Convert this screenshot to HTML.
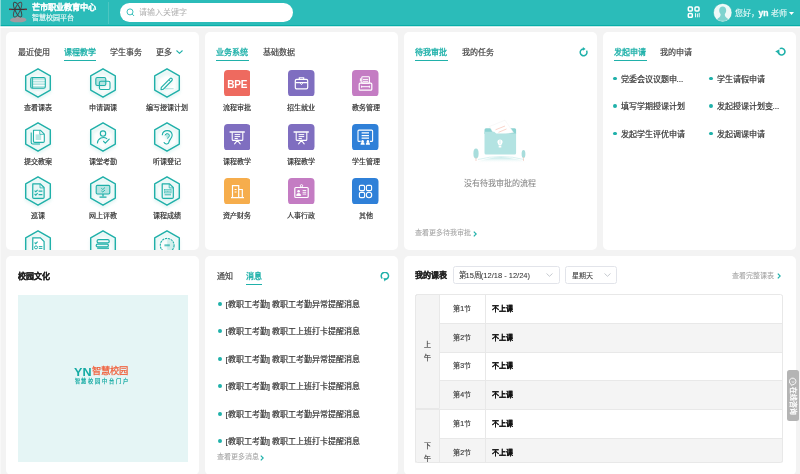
<!DOCTYPE html>
<html lang="zh-CN"><head><meta charset="utf-8">
<style>
*{margin:0;padding:0;box-sizing:border-box}
html,body{width:800px;height:474px;overflow:hidden;background:#f3f3f3;font-family:"Liberation Sans",sans-serif;color:#333;position:relative;-webkit-text-stroke:0.2px}
.a{position:absolute;white-space:nowrap}
.hdr{position:absolute;left:0;top:0;width:800px;height:26px;background:linear-gradient(#2bbcb9 0,#2bbcb9 24.6px,#08aea8 24.6px,#08aea8 26px)}
.hdr2{position:absolute;left:0;top:26px;width:800px;height:2.2px;background:linear-gradient(#9adad7,#fff 1.1px)}
.card{position:absolute;background:#fff;border-radius:5px;overflow:hidden}
.t8{font-size:8px;line-height:8px;margin-top:1px}
.t7{font-size:7px;line-height:7px}
.teal{color:#20b1aa;font-weight:normal;-webkit-text-stroke:0.32px #20b1aa !important}
.ul{position:absolute;height:1.7px;background:#20b1aa;margin-top:0.2px}
.lbl{position:absolute;width:64px;text-align:center;font-size:7px;line-height:7px;color:#333;margin-top:0.8px}
.hx{filter:drop-shadow(0 2px 1.5px rgba(31,176,169,.18))}
.teal,b,[style*="bold"]{-webkit-text-stroke:0}
.dot{position:absolute;width:3.8px;height:3.8px;margin:-0.1px 0 0 -0.1px;border-radius:50%;background:#20b1aa}
</style></head><body><div style="position:absolute;left:0;top:0;width:800px;height:474px;overflow:hidden;background:#f3f3f3;will-change:transform">

<!-- HEADER -->
<div class="hdr">
  <svg class="a" style="left:8px;top:1px" width="20" height="22" viewBox="0 0 20 22">
    <path d="M2 19.5Q3 16.5 7 16.8Q10 15 13.5 16.5Q18 16.2 18.5 19Q17 21.5 10 21.3Q3.5 21.5 2 19.5Z" fill="#a39ba0"/>
    <ellipse cx="9.6" cy="8.6" rx="2.6" ry="8" transform="rotate(-24 9.6 8.6)" fill="none" stroke="#3d4446" stroke-width="1"/>
    <ellipse cx="9.6" cy="8.6" rx="2.6" ry="8" transform="rotate(24 9.6 8.6)" fill="none" stroke="#52484c" stroke-width="1"/>
    <path d="M1 8.4H18.8" stroke="#3a3436" stroke-width="1.3"/>
    <path d="M1 8.4H3.5M16.5 8.4H18.8" stroke="#7a3038" stroke-width="1.3"/>
  </svg>
  <div class="a" style="left:32px;top:2.5px;font-size:8.2px;line-height:10px;font-weight:bold;color:#fff;-webkit-text-stroke:0.05px #fff">芒市职业教育中心</div>
  <div class="a" style="left:32px;top:13px;font-size:7px;line-height:9px;color:#e6f7f6">智慧校园平台</div>
  <div class="a" style="left:108px;top:2px;width:1px;height:22px;background:#4cc6c1"></div>
  <div class="a" style="left:120px;top:3px;width:173px;height:18.5px;background:#fff;border-radius:10px"></div>
  <svg class="a" style="left:126px;top:8px" width="9" height="9" viewBox="0 0 9 9"><circle cx="4" cy="3.9" r="3" stroke="#3cc0bc" stroke-width="1" fill="none"/><path d="M6.2 6.1 L7.8 7.7" stroke="#3cc0bc" stroke-width="1" stroke-linecap="round"/></svg>
  <div class="a" style="left:139px;top:8px;font-size:8px;line-height:9px;color:#b0b0b0;-webkit-text-stroke:0">请输入关键字</div>
  <!-- grid icon -->
  <svg class="a" style="left:687px;top:6.1px" width="13" height="12" viewBox="0 0 13 12">
    <rect x="1.3" y="1.1" width="4" height="4" rx="1" stroke="#fff" stroke-width="1.5" fill="none"/>
    <rect x="8" y="1.1" width="4" height="4" rx="1" stroke="#fff" stroke-width="1.5" fill="none"/>
    <rect x="1.3" y="7.4" width="4" height="3.9" rx="1" stroke="#fff" stroke-width="1.5" fill="none"/>
    <path d="M8.5 7.2V11.3M10.4 7.6V11.3M12.2 7V11.3" stroke="#fff" stroke-width="0.9"/>
  </svg>
  <svg class="a" style="left:713.3px;top:2.6px" width="19.4" height="19.4" viewBox="0 0 19.4 19.4">
    <circle cx="9.7" cy="9.7" r="9.3" fill="#eef9f8" stroke="#25b1ac" stroke-width="0.6"/>
    <path d="M9.7 3.6c-2 0-3.5 1.5-3.5 3.7 0 1.7.7 3 1.3 3.8.2.7 0 1.8-.6 2.6-.8 1-2.2 1.7-3 2.6a9 9 0 0 0 11.6 0c-.8-.9-2.2-1.6-3-2.6-.6-.8-.8-1.9-.6-2.6.6-.8 1.3-2.1 1.3-3.8 0-2.2-1.5-3.7-3.5-3.7z" fill="#7ed3cf"/>
    <path d="M4 16.2a9 9 0 0 0 11.4 0c-1.5.8-3.5 1.3-5.7 1.3s-4.2-.5-5.7-1.3z" fill="#a6e0dd"/>
  </svg>
  <div class="a" style="left:734.5px;top:8px;font-size:8px;line-height:10px;color:#eafaf9;-webkit-text-stroke:0.1px">您好，<b style="color:#fff;font-size:8.6px;-webkit-text-stroke:0.3px #fff">yn</b> 老师</div>
  <svg class="a" style="left:789px;top:12px" width="5" height="3" viewBox="0 0 5 3"><path d="M0 0H5L2.5 3z" fill="#fff"/></svg>
</div>

<div class="hdr2"></div>
<!-- ROW 1 -->
<div class="card" style="left:6px;top:32px;width:193px;height:218px">
  <div class="a t8" style="left:11.5px;top:16px;color:#444">最近使用</div>
  <div class="a t8 teal" style="left:57.5px;top:16px">课程教学</div>
  <div class="ul" style="left:57.5px;top:27.4px;width:32.5px"></div>
  <div class="a t8" style="left:104px;top:16px;color:#444">学生事务</div>
  <div class="a t8" style="left:149.5px;top:16px;color:#444">更多</div>
  <svg class="a" style="left:169.5px;top:18px" width="7" height="4" viewBox="0 0 7 4"><path d="M0.5 0.5L3.5 3.3L6.5 0.5" stroke="#20b1aa" stroke-width="1.1" fill="none"/></svg>
  <svg class="a hx" style="left:17.35px;top:34.90px" width="30" height="32" viewBox="0 0 30 32"><path d="M15 4.3L25.1 10.1V21.9L15 27.7L4.9 21.9V10.1Z" fill="none" stroke="#edf8f7" stroke-width="1.2" stroke-linejoin="round"/><path d="M15 1.8L27.3 8.9V23.1L15 30.2L2.7 23.1V8.9Z" fill="none" stroke="#1fb0a9" stroke-width="1.4" stroke-linejoin="round"/><rect x="7.7" y="10.5" width="14.6" height="10.8" rx="1.6" fill="#b6e5e2" stroke="#1fb0a9" stroke-width="1.1"/><path d="M9.9 13.3H21.6M9.9 15.9H21.6M9.9 18.5H21.6" stroke="#fff" stroke-width="0.9"/><path d="M9.6 10.8V21" stroke="#1fb0a9" stroke-width="0.9"/></svg>
<div class="lbl" style="left:0.35px;top:71.40px">查看课表</div>
<svg class="a hx" style="left:81.65px;top:34.90px" width="30" height="32" viewBox="0 0 30 32"><path d="M15 4.3L25.1 10.1V21.9L15 27.7L4.9 21.9V10.1Z" fill="none" stroke="#edf8f7" stroke-width="1.2" stroke-linejoin="round"/><path d="M15 1.8L27.3 8.9V23.1L15 30.2L2.7 23.1V8.9Z" fill="none" stroke="#1fb0a9" stroke-width="1.4" stroke-linejoin="round"/><rect x="7.8" y="10.5" width="10" height="8" rx="1.5" fill="#b6e5e2" stroke="#1fb0a9" stroke-width="1.1"/><rect x="11.4" y="14.2" width="10.6" height="8.3" rx="1.5" fill="none" stroke="#1fb0a9" stroke-width="1.1"/></svg>
<div class="lbl" style="left:64.65px;top:71.40px">申请调课</div>
<svg class="a hx" style="left:145.95px;top:34.90px" width="30" height="32" viewBox="0 0 30 32"><path d="M15 4.3L25.1 10.1V21.9L15 27.7L4.9 21.9V10.1Z" fill="none" stroke="#edf8f7" stroke-width="1.2" stroke-linejoin="round"/><path d="M15 1.8L27.3 8.9V23.1L15 30.2L2.7 23.1V8.9Z" fill="none" stroke="#1fb0a9" stroke-width="1.4" stroke-linejoin="round"/><path d="M9.3 20.4L18 11.6A1.3 1.3 0 0 1 19.9 13.5L11.2 22.3L9 22.6Z" fill="none" stroke="#1fb0a9" stroke-width="1.1" stroke-linejoin="round"/><path d="M16.8 12.8L18.7 14.7" stroke="#1fb0a9" stroke-width="0.8"/><path d="M13 21.7H21.6" stroke="#8fd6d2" stroke-width="0.7"/></svg>
<div class="lbl" style="left:128.95px;top:71.40px">编写授课计划</div>
<svg class="a hx" style="left:17.35px;top:88.90px" width="30" height="32" viewBox="0 0 30 32"><path d="M15 4.3L25.1 10.1V21.9L15 27.7L4.9 21.9V10.1Z" fill="none" stroke="#edf8f7" stroke-width="1.2" stroke-linejoin="round"/><path d="M15 1.8L27.3 8.9V23.1L15 30.2L2.7 23.1V8.9Z" fill="none" stroke="#1fb0a9" stroke-width="1.4" stroke-linejoin="round"/><path d="M8.2 11.5V21.5a1.5 1.5 0 0 0 1.5 1.5H17" fill="none" stroke="#1fb0a9" stroke-width="1.1"/><path d="M10.5 9.2H17.3L21.3 13.2V20.2a1.2 1.2 0 0 1-1.2 1.2H11.7a1.2 1.2 0 0 1-1.2-1.2Z" fill="#fff" stroke="#1fb0a9" stroke-width="1.1" stroke-linejoin="round"/><rect x="12.6" y="13.4" width="5.6" height="5.6" fill="#b6e5e2"/><path d="M16.8 9.5V13.3H21" fill="none" stroke="#1fb0a9" stroke-width="0.8"/></svg>
<div class="lbl" style="left:0.35px;top:125.40px">提交教案</div>
<svg class="a hx" style="left:81.65px;top:88.90px" width="30" height="32" viewBox="0 0 30 32"><path d="M15 4.3L25.1 10.1V21.9L15 27.7L4.9 21.9V10.1Z" fill="none" stroke="#edf8f7" stroke-width="1.2" stroke-linejoin="round"/><path d="M15 1.8L27.3 8.9V23.1L15 30.2L2.7 23.1V8.9Z" fill="none" stroke="#1fb0a9" stroke-width="1.4" stroke-linejoin="round"/><circle cx="15" cy="12.6" r="2.7" fill="none" stroke="#1fb0a9" stroke-width="1.1"/><path d="M9.4 22A6 6 0 0 1 18.8 17.6" fill="none" stroke="#1fb0a9" stroke-width="1.1" stroke-linecap="round"/><path d="M15.6 20.3L17.3 22.1L21.2 18.2" fill="none" stroke="#1fb0a9" stroke-width="1.2" stroke-linecap="round" stroke-linejoin="round"/></svg>
<div class="lbl" style="left:64.65px;top:125.40px">课堂考勤</div>
<svg class="a hx" style="left:145.95px;top:88.90px" width="30" height="32" viewBox="0 0 30 32"><path d="M15 4.3L25.1 10.1V21.9L15 27.7L4.9 21.9V10.1Z" fill="none" stroke="#edf8f7" stroke-width="1.2" stroke-linejoin="round"/><path d="M15 1.8L27.3 8.9V23.1L15 30.2L2.7 23.1V8.9Z" fill="none" stroke="#1fb0a9" stroke-width="1.4" stroke-linejoin="round"/><path d="M10.3 13.8A5 5 0 0 1 20.2 14C20.2 17.3 17.4 18.3 17 20.8A2.6 2.6 0 0 1 12.1 21.6" fill="none" stroke="#1fb0a9" stroke-width="1.1" stroke-linecap="round"/><path d="M13.1 14.3A2.2 2.2 0 0 1 17.4 14.4C17.4 15.8 16 16.4 15.6 17.6" fill="#b6e5e2" stroke="#1fb0a9" stroke-width="1"/></svg>
<div class="lbl" style="left:128.95px;top:125.40px">听课登记</div>
<svg class="a hx" style="left:17.35px;top:142.90px" width="30" height="32" viewBox="0 0 30 32"><path d="M15 4.3L25.1 10.1V21.9L15 27.7L4.9 21.9V10.1Z" fill="none" stroke="#edf8f7" stroke-width="1.2" stroke-linejoin="round"/><path d="M15 1.8L27.3 8.9V23.1L15 30.2L2.7 23.1V8.9Z" fill="none" stroke="#1fb0a9" stroke-width="1.4" stroke-linejoin="round"/><path d="M9.8 8.8H17.4L21.1 12.5V22.2a1.2 1.2 0 0 1-1.2 1.2H10.9a1.2 1.2 0 0 1-1.2-1.2Z" fill="#e6f6f5" stroke="#1fb0a9" stroke-width="1.2" stroke-linejoin="round"/><path d="M17 9V12.9H21" fill="none" stroke="#1fb0a9" stroke-width="0.8"/><path d="M11.6 15.6L12.8 16.8L14.6 14.8M11.6 19L12.8 20.2L14.6 18.2" fill="none" stroke="#1fb0a9" stroke-width="1.1"/><path d="M15.6 16.2H19.4M15.6 19.6H19.4" stroke="#1fb0a9" stroke-width="1.3"/></svg>
<div class="lbl" style="left:0.35px;top:179.40px">巡课</div>
<svg class="a hx" style="left:81.65px;top:142.90px" width="30" height="32" viewBox="0 0 30 32"><path d="M15 4.3L25.1 10.1V21.9L15 27.7L4.9 21.9V10.1Z" fill="none" stroke="#edf8f7" stroke-width="1.2" stroke-linejoin="round"/><path d="M15 1.8L27.3 8.9V23.1L15 30.2L2.7 23.1V8.9Z" fill="none" stroke="#1fb0a9" stroke-width="1.4" stroke-linejoin="round"/><rect x="8.2" y="10.4" width="13.6" height="8.6" rx="1.2" fill="#b6e5e2" stroke="#1fb0a9" stroke-width="1.1"/><path d="M13.3 13.3L14.8 14.5L17 12.5M13.3 15.8L14.8 17L17 15" fill="none" stroke="#1fb0a9" stroke-width="0.9"/><path d="M15 19V21.2M11.5 22.2H18.5" stroke="#1fb0a9" stroke-width="1.3"/></svg>
<div class="lbl" style="left:64.65px;top:179.40px">网上评教</div>
<svg class="a hx" style="left:145.95px;top:142.90px" width="30" height="32" viewBox="0 0 30 32"><path d="M15 4.3L25.1 10.1V21.9L15 27.7L4.9 21.9V10.1Z" fill="none" stroke="#edf8f7" stroke-width="1.2" stroke-linejoin="round"/><path d="M15 1.8L27.3 8.9V23.1L15 30.2L2.7 23.1V8.9Z" fill="none" stroke="#1fb0a9" stroke-width="1.4" stroke-linejoin="round"/><path d="M10.2 8.8H17.6L21.3 12.5V22.2a1.2 1.2 0 0 1-1.2 1.2H11.4a1.2 1.2 0 0 1-1.2-1.2Z" fill="#eaf7f6" stroke="#1fb0a9" stroke-width="1.2" stroke-linejoin="round"/><path d="M17.2 9V12.9H21.2" fill="none" stroke="#1fb0a9" stroke-width="0.8"/><rect x="12.5" y="14.6" width="6.6" height="3.4" fill="#b6e5e2" stroke="#1fb0a9" stroke-width="0.5"/><path d="M13.4 16.3H18.2" stroke="#1fb0a9" stroke-width="0.7" stroke-dasharray="1 0.5"/><path d="M12.6 19.8H19" stroke="#1fb0a9" stroke-width="0.9"/></svg>
<div class="lbl" style="left:128.95px;top:179.40px">课程成绩</div>
<svg class="a hx" style="left:17.35px;top:196.90px" width="30" height="32" viewBox="0 0 30 32"><path d="M15 4.3L25.1 10.1V21.9L15 27.7L4.9 21.9V10.1Z" fill="none" stroke="#edf8f7" stroke-width="1.2" stroke-linejoin="round"/><path d="M15 1.8L27.3 8.9V23.1L15 30.2L2.7 23.1V8.9Z" fill="none" stroke="#1fb0a9" stroke-width="1.4" stroke-linejoin="round"/><path d="M9.8 8.8H17.4L21.1 12.5V22.2a1.2 1.2 0 0 1-1.2 1.2H10.9a1.2 1.2 0 0 1-1.2-1.2Z" fill="#fff" stroke="#1fb0a9" stroke-width="1.2"/><path d="M11.6 13.5L12.8 14.7L14.6 12.7" fill="none" stroke="#1fb0a9" stroke-width="1.1"/><circle cx="13" cy="18.4" r="1.5" fill="none" stroke="#1fb0a9" stroke-width="1"/><path d="M15.8 17.6H19.4M15.8 19.4H19.4" stroke="#1fb0a9" stroke-width="1"/></svg>
<svg class="a hx" style="left:81.65px;top:196.90px" width="30" height="32" viewBox="0 0 30 32"><path d="M15 4.3L25.1 10.1V21.9L15 27.7L4.9 21.9V10.1Z" fill="none" stroke="#edf8f7" stroke-width="1.2" stroke-linejoin="round"/><path d="M15 1.8L27.3 8.9V23.1L15 30.2L2.7 23.1V8.9Z" fill="none" stroke="#1fb0a9" stroke-width="1.4" stroke-linejoin="round"/><rect x="9.1" y="10.7" width="12.1" height="3.2" rx="1.4" fill="none" stroke="#1fb0a9" stroke-width="1.2"/><rect x="8.2" y="15.2" width="12.2" height="2.6" rx="1.2" fill="none" stroke="#1fb0a9" stroke-width="1.2"/><path d="M9.2 19.2H21" stroke="#1fb0a9" stroke-width="1.3"/></svg>
<svg class="a hx" style="left:145.95px;top:196.90px" width="30" height="32" viewBox="0 0 30 32"><path d="M15 4.3L25.1 10.1V21.9L15 27.7L4.9 21.9V10.1Z" fill="none" stroke="#edf8f7" stroke-width="1.2" stroke-linejoin="round"/><path d="M15 1.8L27.3 8.9V23.1L15 30.2L2.7 23.1V8.9Z" fill="none" stroke="#1fb0a9" stroke-width="1.4" stroke-linejoin="round"/><path d="M15.2 9.3A7 7 0 0 1 15.2 23.3" fill="#b6e5e2" opacity=".5"/><circle cx="15.2" cy="16.3" r="6.9" fill="none" stroke="#1fb0a9" stroke-width="1.1" stroke-dasharray="2.2 0.8"/><rect x="12.4" y="15.3" width="5.4" height="2" fill="#1fb0a9" opacity=".7"/></svg>
</div>

<div class="card" style="left:205px;top:32px;width:193px;height:218px">
  <div class="a t8 teal" style="left:11px;top:16px">业务系统</div>
  <div class="ul" style="left:11px;top:27.4px;width:32.5px"></div>
  <div class="a t8" style="left:57.5px;top:16px;color:#444">基础数据</div>
<svg class="a" style="left:18.85px;top:37.90px" width="26.5" height="26.5" viewBox="0 0 26.5 26.5"><rect width="26.5" height="26.5" rx="3.8" fill="#ee6a5f"/><text x="13.25" y="17.6" text-anchor="middle" font-family="Liberation Sans" font-weight="bold" font-size="10" fill="#fff" letter-spacing="-0.2">BPE</text></svg>
<div class="lbl" style="left:0.10px;top:71.40px">流程审批</div>
<svg class="a" style="left:83.15px;top:37.90px" width="26.5" height="26.5" viewBox="0 0 26.5 26.5"><rect width="26.5" height="26.5" rx="3.8" fill="#7f6ec0"/><rect x="7.3" y="9.3" width="12.4" height="9.6" rx="1.4" fill="none" stroke="#fff" stroke-width="1.2"/><path d="M11.3 9.3V7.7H15.7V9.3M7.5 12.6H19.5" fill="none" stroke="#fff" stroke-width="1.1"/><path d="M12.3 13.2L13.5 14.6L14.7 13.2" fill="none" stroke="#fff" stroke-width="1"/></svg>
<div class="lbl" style="left:64.40px;top:71.40px">招生就业</div>
<svg class="a" style="left:147.45px;top:37.90px" width="26.5" height="26.5" viewBox="0 0 26.5 26.5"><rect width="26.5" height="26.5" rx="3.8" fill="#c47cc3"/><rect x="7.2" y="13.2" width="12.6" height="7" rx="1" fill="none" stroke="#fff" stroke-width="1.2"/><rect x="9.8" y="6.8" width="7.6" height="6.4" rx="0.8" fill="none" stroke="#fff" stroke-width="1.1"/><path d="M11 9.4H16.2M11 11.3H16.2M9.6 16.7H17.4M9.6 15.7V17.7M17.4 15.7V17.7M8.4 8.3V11.5" stroke="#fff" stroke-width="1"/></svg>
<div class="lbl" style="left:128.70px;top:71.40px">教务管理</div>
<svg class="a" style="left:18.85px;top:91.90px" width="26.5" height="26.5" viewBox="0 0 26.5 26.5"><rect width="26.5" height="26.5" rx="3.8" fill="#7f6ec0"/><path d="M8.2 8.2V15.4a1 1 0 0 0 1 1H17.8a1 1 0 0 0 1-1V8.2" fill="none" stroke="#fff" stroke-width="1.1"/><path d="M6.1 8H20.3" stroke="#fff" stroke-width="1.4" stroke-linecap="round"/><path d="M10.6 10.6H16.2M10.6 12.6H16.2M10.6 14.5H13.8" stroke="#fff" stroke-width="1"/><path d="M13.4 16.4L10.6 19.8M13.4 16.4L16.2 19.8" stroke="#fff" stroke-width="1.1" stroke-linecap="round"/></svg>
<div class="lbl" style="left:0.10px;top:125.40px">课程教学</div>
<svg class="a" style="left:83.15px;top:91.90px" width="26.5" height="26.5" viewBox="0 0 26.5 26.5"><rect width="26.5" height="26.5" rx="3.8" fill="#7f6ec0"/><path d="M8.2 8.2V15.4a1 1 0 0 0 1 1H17.8a1 1 0 0 0 1-1V8.2" fill="none" stroke="#fff" stroke-width="1.1"/><path d="M6.1 8H20.3" stroke="#fff" stroke-width="1.4" stroke-linecap="round"/><path d="M10.6 10.6H16.2M10.6 12.6H16.2M10.6 14.5H13.8" stroke="#fff" stroke-width="1"/><path d="M13.4 16.4L10.6 19.8M13.4 16.4L16.2 19.8" stroke="#fff" stroke-width="1.1" stroke-linecap="round"/></svg>
<div class="lbl" style="left:64.40px;top:125.40px">课程教学</div>
<svg class="a" style="left:147.45px;top:91.90px" width="26.5" height="26.5" viewBox="0 0 26.5 26.5"><rect width="26.5" height="26.5" rx="3.8" fill="#2f80d8"/><path d="M8.6 17.4H7a1 1 0 0 1-1-1V7.1a1 1 0 0 1 1-1H19.6a1 1 0 0 1 1 1V16.4a1 1 0 0 1-1 1H18" fill="none" stroke="#fff" stroke-width="1.1"/><path d="M9.6 8.9H17M9.6 11.6H17M9.6 14.2H17" stroke="#fff" stroke-width="1.2"/><circle cx="10.6" cy="17.3" r="1.2" fill="#fff"/><circle cx="15.9" cy="17.3" r="1.2" fill="#fff"/><path d="M8.6 20.8V20a2 2 0 0 1 4 0V20.8ZM13.9 20.8V20a2 2 0 0 1 4 0V20.8Z" fill="#fff"/></svg>
<div class="lbl" style="left:128.70px;top:125.40px">学生管理</div>
<svg class="a" style="left:18.85px;top:145.90px" width="26.5" height="26.5" viewBox="0 0 26.5 26.5"><rect width="26.5" height="26.5" rx="3.8" fill="#f6ad4c"/><path d="M8.5 19.5V7.6H14.7V19.5M14.7 11.5H18.3V19.5M7 19.6H20" fill="none" stroke="#fff" stroke-width="1.2"/><path d="M10.6 11.5H12.6M10.6 14H12.6" stroke="#fff" stroke-width="1"/></svg>
<div class="lbl" style="left:0.10px;top:179.40px">资产财务</div>
<svg class="a" style="left:83.15px;top:145.90px" width="26.5" height="26.5" viewBox="0 0 26.5 26.5"><rect width="26.5" height="26.5" rx="3.8" fill="#c47cc3"/><rect x="6.8" y="9.5" width="13.4" height="10" rx="1" fill="none" stroke="#fff" stroke-width="1.2"/><circle cx="13.5" cy="7.8" r="1.2" fill="none" stroke="#fff" stroke-width="1"/><circle cx="10.6" cy="13.3" r="1.3" fill="#fff"/><path d="M8.6 17.5a2 2 0 0 1 4 0ZM14.6 12.5H18.2M14.6 14.3H18.2M14.6 16.1H18.2" fill="#fff" stroke="#fff" stroke-width="0.9"/></svg>
<div class="lbl" style="left:64.40px;top:179.40px">人事行政</div>
<svg class="a" style="left:147.45px;top:145.90px" width="26.5" height="26.5" viewBox="0 0 26.5 26.5"><rect width="26.5" height="26.5" rx="3.8" fill="#2f80d8"/><rect x="7.4" y="7.4" width="5.2" height="5.2" rx="1.3" fill="none" stroke="#fff" stroke-width="1.1"/><rect x="14.4" y="7.4" width="5.2" height="5.2" rx="1.3" fill="none" stroke="#fff" stroke-width="1.1"/><rect x="7.4" y="14.4" width="5.2" height="5.2" rx="1.3" fill="none" stroke="#fff" stroke-width="1.1"/><circle cx="17" cy="17" r="2.7" fill="none" stroke="#fff" stroke-width="1.1"/></svg>
<div class="lbl" style="left:128.70px;top:179.40px">其他</div>
</div>

<div class="card" style="left:404px;top:32px;width:193px;height:218px">
  <div class="a t8 teal" style="left:11px;top:16px">待我审批</div>
  <div class="ul" style="left:11px;top:27.4px;width:32.5px"></div>
  <div class="a t8" style="left:57.5px;top:16px;color:#444">我的任务</div>
  <svg class="a" style="left:175px;top:14.6px" width="10" height="10" viewBox="0 0 10 10"><path d="M4.6 1.9A3.4 3.4 0 1 0 7.54 3.6" fill="none" stroke="#20b1aa" stroke-width="1.5"/><path d="M3.9 0L6.6 1.9L3.9 3.8Z" fill="#20b1aa"/></svg>
  <svg class="a" style="left:66px;top:86px" width="62" height="46" viewBox="0 0 62 46">
    <defs><linearGradient id="gr" x1="0" y1="0" x2="0" y2="1"><stop offset="0" stop-color="#bde7e6"/><stop offset="1" stop-color="#fff" stop-opacity="0"/></linearGradient></defs>
    <path d="M4.5 45Q31 33.6 58.5 45Z" fill="url(#gr)"/><path d="M8 41.5Q31 35.5 54 41.5" fill="none" stroke="#d2efee" stroke-width="0.8"/>
    <path d="M14.5 11.8a1.5 1.5 0 0 1 1.5-1.5H44.6a1.5 1.5 0 0 1 1.5 1.5V16H14.5Z" fill="#8dd3d2"/>
    <path d="M19.5 8.5L35 2.2L43.5 14.5L25 18Z" fill="#fff" stroke="#eeeeee" stroke-width="0.4"/>
    <path d="M25.5 11.8L35 8M28.5 14.3L36.5 11" stroke="#f5b8a8" stroke-width="0.6"/>
    <path d="M14.5 13.8H24.2L26.2 15.6H46.1V35a1.5 1.5 0 0 1-1.5 1.5H16a1.5 1.5 0 0 1-1.5-1.5Z" fill="#b3e3e2"/>
    <path d="M32.6 24a2.6 2.6 0 1 0-5.2 0c0 1.3.9 1.9 1.2 2.9h2.8c.3-1 1.2-1.6 1.2-2.9z M28.7 27.6h2.6v1.8h-2.6z" fill="#fff"/>
    <path d="M30 22.2V26" stroke="#b3e3e2" stroke-width="0.6"/>
    <ellipse cx="6" cy="35.5" rx="2.6" ry="5" fill="#a8dddc"/><path d="M6 39.5V43" stroke="#f0c2b5" stroke-width="0.7"/>
    <ellipse cx="53.5" cy="36" rx="1.9" ry="4" fill="#a8dddc"/><path d="M53.5 39V43" stroke="#f0c2b5" stroke-width="0.6"/>
  </svg>
  <div class="a t8" style="left:60px;top:147px;color:#8a8a8a;-webkit-text-stroke:0.1px">没有待我审批的流程</div>
  <div class="a t7" style="left:11px;top:197px;color:#a3a3a3;-webkit-text-stroke:0.05px">查看更多待我审批</div>
  <svg class="a" style="left:69px;top:198.5px" width="4" height="6" viewBox="0 0 4 6"><path d="M0.8 0.6L3.2 3L0.8 5.4" fill="none" stroke="#20b1aa" stroke-width="1.2"/></svg>
</div>

<div class="card" style="left:603px;top:32px;width:193px;height:218px">
  <div class="a t8 teal" style="left:11px;top:16px">发起申请</div>
  <div class="ul" style="left:11px;top:27.4px;width:32.5px"></div>
  <div class="a t8" style="left:57px;top:16px;color:#444">我的申请</div>
<svg class="a" style="left:172.4px;top:15.1px" width="11" height="10" viewBox="0 0 11 10"><path d="M4.8 1.66A3.4 3.4 0 1 1 3.1 4.6" fill="none" stroke="#20b1aa" stroke-width="1.6"/><path d="M0.2 4.5L4.4 2.3V6.7Z" fill="#20b1aa"/></svg>
<div class="dot" style="left:10.55px;top:44.70px"></div><div class="a t8" style="left:17.6px;top:42.5px;color:#333">党委会议议题申...</div>
<div class="dot" style="left:106.55px;top:44.70px"></div><div class="a t8" style="left:113.6px;top:42.5px;color:#333">学生请假申请</div>
<div class="dot" style="left:10.55px;top:72.20px"></div><div class="a t8" style="left:17.6px;top:70.0px;color:#333">填写学期授课计划</div>
<div class="dot" style="left:106.55px;top:72.20px"></div><div class="a t8" style="left:113.6px;top:70.0px;color:#333">发起授课计划变...</div>
<div class="dot" style="left:10.55px;top:99.70px"></div><div class="a t8" style="left:17.6px;top:97.5px;color:#333">发起学生评优申请</div>
<div class="dot" style="left:106.55px;top:99.70px"></div><div class="a t8" style="left:113.6px;top:97.5px;color:#333">发起调课申请</div>
</div>

<!-- ROW 2 -->
<div class="card" style="left:6px;top:256px;width:193px;height:219px">
  <div class="a t8" style="left:12px;top:15.5px;font-weight:bold;color:#222;-webkit-text-stroke:0.25px #222">校园文化</div>
  <div class="a" style="left:12px;top:38.5px;width:169.5px;height:167.5px;background:#e5f5f5"></div>
  <div class="a" style="left:67.5px;top:110px;font-size:10.5px;line-height:12px;font-weight:bold;color:#14aaa3;transform:scaleX(1.2);transform-origin:0 0">YN</div>
  <div class="a" style="left:85.5px;top:110px;font-size:9.3px;line-height:11px;color:#f0603c;-webkit-text-stroke:0.25px #f0603c">智慧校园</div>
  <div class="a" style="left:68.5px;top:121.5px;font-size:5.2px;line-height:6px;color:#14aaa3;letter-spacing:1.9px">智慧校园中台门户</div>
</div>

<div class="card" style="left:205px;top:256px;width:193px;height:219px">
  <div class="a t8" style="left:11.5px;top:16px;color:#444">通知</div>
  <div class="a t8 teal" style="left:41px;top:16px">消息</div>
  <div class="ul" style="left:41px;top:27.4px;width:16px"></div>
<svg class="a" style="left:174.5px;top:16px" width="10" height="10" viewBox="0 0 10 10"><path d="M2.2 6.4A3.65 3.65 0 1 1 5 7.55" fill="none" stroke="#20b1aa" stroke-width="1.5"/><path d="M3.4 5.9L6.6 6.4L4.6 9.4Z" fill="#20b1aa"/></svg>
<div class="dot" style="left:13.40px;top:45.90px"></div><div class="a t8" style="left:20.5px;top:43.7px;color:#333">[教职工考勤] 教职工考勤异常提醒消息</div>
<div class="dot" style="left:13.40px;top:73.40px"></div><div class="a t8" style="left:20.5px;top:71.2px;color:#333">[教职工考勤] 教职工上班打卡提醒消息</div>
<div class="dot" style="left:13.40px;top:100.90px"></div><div class="a t8" style="left:20.5px;top:98.7px;color:#333">[教职工考勤] 教职工考勤异常提醒消息</div>
<div class="dot" style="left:13.40px;top:128.40px"></div><div class="a t8" style="left:20.5px;top:126.2px;color:#333">[教职工考勤] 教职工上班打卡提醒消息</div>
<div class="dot" style="left:13.40px;top:155.90px"></div><div class="a t8" style="left:20.5px;top:153.7px;color:#333">[教职工考勤] 教职工考勤异常提醒消息</div>
<div class="dot" style="left:13.40px;top:183.40px"></div><div class="a t8" style="left:20.5px;top:181.2px;color:#333">[教职工考勤] 教职工上班打卡提醒消息</div>
<div class="a t7" style="left:11.5px;top:196.5px;color:#a3a3a3;-webkit-text-stroke:0.05px">查看更多消息</div>
<svg class="a" style="left:54.5px;top:198.5px" width="4" height="6" viewBox="0 0 4 6"><path d="M0.8 0.6L3.2 3L0.8 5.4" fill="none" stroke="#20b1aa" stroke-width="1.2"/></svg>
</div>

<div class="card" style="left:404px;top:256px;width:392px;height:219px">
  <div class="a t8" style="left:11px;top:15px;font-weight:bold;color:#222;-webkit-text-stroke:0.25px #222">我的课表</div>
<div class="a" style="left:49px;top:10px;width:106.5px;height:17.5px;border:1px solid #e2e4ea;border-radius:2.5px"></div>
<div class="a" style="left:54.5px;top:14.5px;font-size:7.5px;line-height:9px;color:#333;-webkit-text-stroke:0.05px">第15周(12/18 - 12/24)</div>
<svg class="a" style="left:142px;top:17px" width="7" height="4" viewBox="0 0 7 4"><path d="M0.5 0.5L3.5 3.3L6.5 0.5" stroke="#b8bcc4" stroke-width="0.8" fill="none"/></svg>
<div class="a" style="left:161px;top:10px;width:51.5px;height:17.5px;border:1px solid #e2e4ea;border-radius:2.5px"></div>
<div class="a" style="left:167.5px;top:14.5px;font-size:7px;line-height:9px;color:#444;-webkit-text-stroke:0.1px">星期天</div>
<svg class="a" style="left:200px;top:17px" width="7" height="4" viewBox="0 0 7 4"><path d="M0.5 0.5L3.5 3.3L6.5 0.5" stroke="#b8bcc4" stroke-width="0.8" fill="none"/></svg>
<div class="a t7" style="left:328px;top:16px;color:#a3a3a3;-webkit-text-stroke:0.05px">查看完整课表</div>
<svg class="a" style="left:373px;top:16.5px" width="4" height="6" viewBox="0 0 4 6"><path d="M0.8 0.6L3.2 3L0.8 5.4" fill="none" stroke="#20b1aa" stroke-width="1.2"/></svg>
<div class="a" style="left:11.2px;top:38px;width:368px;height:169px;overflow:hidden;border-radius:2.5px">
<div class="a" style="left:0;top:0;width:368px;height:260px;border:1px solid #e8e8e8;border-radius:2.5px;background:#fff"></div>
<div class="a" style="left:24.7px;top:0.00px;width:342.6px;height:28.82px;background:#fff;border-top:none"></div>
<div class="a t7" style="left:38px;top:10.80px;color:#444">第1节</div>
<div class="a t7" style="left:77px;top:10.80px;font-weight:bold;color:#111;-webkit-text-stroke:0.12px #111">不上课</div>
<div class="a" style="left:24.7px;top:28.82px;width:342.6px;height:28.82px;background:#f4f4f4;border-top:1px solid #e8e8e8"></div>
<div class="a t7" style="left:38px;top:39.62px;color:#444">第2节</div>
<div class="a t7" style="left:77px;top:39.62px;font-weight:bold;color:#111;-webkit-text-stroke:0.12px #111">不上课</div>
<div class="a" style="left:24.7px;top:57.64px;width:342.6px;height:28.82px;background:#fff;border-top:1px solid #e8e8e8"></div>
<div class="a t7" style="left:38px;top:68.44px;color:#444">第3节</div>
<div class="a t7" style="left:77px;top:68.44px;font-weight:bold;color:#111;-webkit-text-stroke:0.12px #111">不上课</div>
<div class="a" style="left:24.7px;top:86.46px;width:342.6px;height:28.82px;background:#f4f4f4;border-top:1px solid #e8e8e8"></div>
<div class="a t7" style="left:38px;top:97.26px;color:#444">第4节</div>
<div class="a t7" style="left:77px;top:97.26px;font-weight:bold;color:#111;-webkit-text-stroke:0.12px #111">不上课</div>
<div class="a" style="left:24.7px;top:115.28px;width:342.6px;height:28.82px;background:#fff;border-top:1px solid #e8e8e8"></div>
<div class="a t7" style="left:38px;top:126.08px;color:#444">第1节</div>
<div class="a t7" style="left:77px;top:126.08px;font-weight:bold;color:#111;-webkit-text-stroke:0.12px #111">不上课</div>
<div class="a" style="left:24.7px;top:144.10px;width:342.6px;height:28.82px;background:#f4f4f4;border-top:1px solid #e8e8e8"></div>
<div class="a t7" style="left:38px;top:154.90px;color:#444">第2节</div>
<div class="a t7" style="left:77px;top:154.90px;font-weight:bold;color:#111;-webkit-text-stroke:0.12px #111">不上课</div>
<div class="a" style="left:24.7px;top:172.92px;width:342.6px;height:28.82px;background:#fff;border-top:1px solid #e8e8e8"></div>
<div class="a t7" style="left:38px;top:183.72px;color:#444">第3节</div>
<div class="a t7" style="left:77px;top:183.72px;font-weight:bold;color:#111;-webkit-text-stroke:0.12px #111">不上课</div>
<div class="a" style="left:24.7px;top:201.74px;width:342.6px;height:28.82px;background:#f4f4f4;border-top:1px solid #e8e8e8"></div>
<div class="a t7" style="left:38px;top:212.54px;color:#444">第4节</div>
<div class="a t7" style="left:77px;top:212.54px;font-weight:bold;color:#111;-webkit-text-stroke:0.12px #111">不上课</div>
<div class="a" style="left:0;top:0;width:24.7px;height:115.28px;background:#f4f4f4;border:1px solid #e8e8e8;border-radius:2.5px 0 0 0"></div>
<div class="a" style="left:0;top:115.28px;width:24.7px;height:115.28px;background:#f4f4f4;border:1px solid #e8e8e8;border-top:1px solid #e8e8e8"></div>
<div class="a" style="left:69.8px;top:0;width:1px;height:260px;background:#e8e8e8"></div>
<div class="a t7" style="left:9.3px;top:44.3px;color:#444;line-height:13px;white-space:normal;width:8px">上 午</div>
<div class="a t7" style="left:9.3px;top:144.5px;color:#444;line-height:13px;white-space:normal;width:8px">下 午</div>
<div class="a" style="left:0;top:0;width:368px;height:169px;border:1px solid #e8e8e8;border-radius:2.5px"></div>
</div>
</div>

<div class="a" style="left:787px;top:370px;width:12px;height:51px;background:#b4b4b4;border-radius:2.5px"></div>
<svg class="a" style="left:789px;top:376.5px" width="8" height="9" viewBox="0 0 8 9"><path d="M2.2 7.4A3.3 3.3 0 1 1 4 7.7L2.3 8.3Z" fill="none" stroke="#fff" stroke-width="0.9"/><path d="M2.7 4.7Q4 5.9 5.3 4.7" fill="none" stroke="#fff" stroke-width="0.7"/></svg>
<div class="a" style="left:779px;top:397px;width:28px;height:8px;font-size:6.8px;line-height:8px;color:#fff;-webkit-text-stroke:0.3px #fff;transform:rotate(90deg);text-align:center">在线咨询</div>
<div class="a" style="left:0;top:0;width:1.2px;height:474px;background:rgba(255,255,255,.45)"></div>
</div></body></html>
